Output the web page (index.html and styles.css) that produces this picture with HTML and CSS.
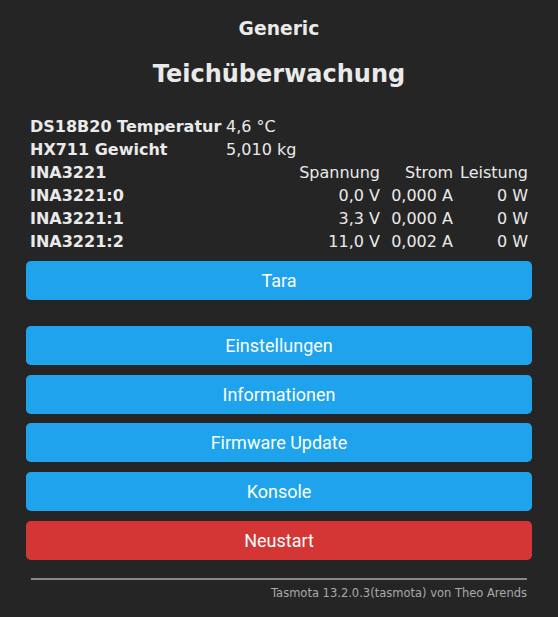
FILE: index.html
```html
<!DOCTYPE html>
<html lang="de">
<head>
<meta charset="utf-8">
<title>Teichüberwachung</title>
<link rel="stylesheet" href="styles.css">
</head>
<body>
<div class="wrap">
  <h3 class="dev">Generic</h3>
  <h2 class="name">Teichüberwachung</h2>
  <div class="sensors">
    <div class="k">DS18B20 Temperatur</div><div class="v span">4,6 °C</div>
    <div class="k">HX711 Gewicht</div><div class="v span">5,010 kg</div>
    <div class="k">INA3221</div><div class="v r">Spannung</div><div class="v r">Strom</div><div class="v r">Leistung</div>
    <div class="k">INA3221:0</div><div class="v r">0,0 V</div><div class="v r">0,000 A</div><div class="v r">0 W</div>
    <div class="k">INA3221:1</div><div class="v r">3,3 V</div><div class="v r">0,000 A</div><div class="v r">0 W</div>
    <div class="k">INA3221:2</div><div class="v r">11,0 V</div><div class="v r">0,002 A</div><div class="v r">0 W</div>
  </div>
  <button class="btn tara">Tara</button>
  <div class="menu">
    <button class="btn">Einstellungen</button>
    <button class="btn">Informationen</button>
    <button class="btn">Firmware Update</button>
    <button class="btn">Konsole</button>
    <button class="btn red">Neustart</button>
  </div>
  <div class="foot">
    <hr class="line">
    <a class="credit">Tasmota 13.2.0.3(tasmota) von Theo Arends</a>
  </div>
</div>
</body>
</html>
```
FILE: styles.css
```css
html, body {
  margin: 0;
  padding: 0;
  background: #252525;
}
body {
  font-family: "DejaVu Sans", Verdana, sans-serif;
  color: #eaeaea;
}
.wrap {
  padding: 18px 26px 0 26px;
}
.dev {
  margin: 0;
  font-size: 18.72px;
  line-height: 22px;
  font-weight: bold;
  text-align: center;
}
.name {
  margin: 20px 0 0 0;
  font-size: 24px;
  line-height: 28px;
  font-weight: bold;
  text-align: center;
}
.sensors {
  margin: 27px 2px 0 2px;
  display: grid;
  grid-template-columns: 196px 158px 73px 1fr;
  font-size: 16px;
  line-height: 23px;
}
.k {
  font-weight: bold;
  padding: 0 2px;
  white-space: nowrap;
}
.v {
  padding: 0 2px;
  white-space: nowrap;
}
.span {
  grid-column: 2 / 5;
}
.r {
  text-align: right;
}
.btn {
  display: block;
  width: 100%;
  height: 39px;
  border: 0;
  border-radius: 4.8px;
  background: #1fa3ec;
  color: #faffff;
  font-family: Roboto, "Noto Sans", sans-serif;
  font-size: 18px;
  line-height: 39px;
  padding: 0;
  text-align: center;
}
.tara {
  margin-top: 8px;
}
.menu {
  margin-top: 26px;
  display: flex;
  flex-direction: column;
  gap: 9.7px;
}
.red {
  background: #d43535;
}
.foot {
  margin: 18px 5px 0 5px;
  text-align: right;
  font-size: 11.5px;
  line-height: 13px;
}
.line {
  margin: 0 0 7px 0;
  border: 0;
  height: 2px;
  background: #8a8a8a;
}
.credit {
  color: #aaa;
}
```
